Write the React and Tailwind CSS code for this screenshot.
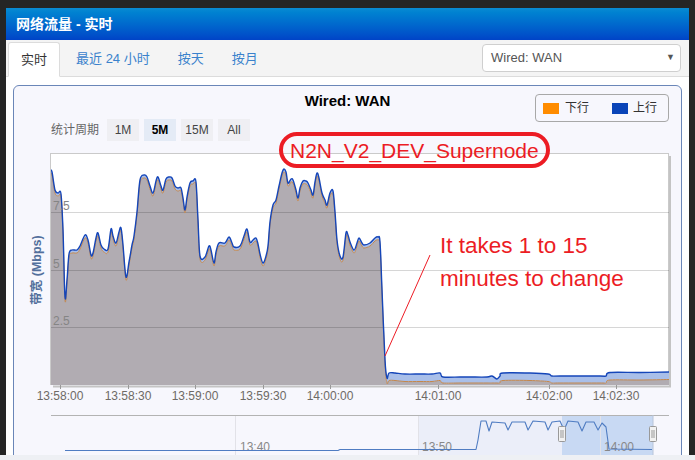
import React from "react";

// main series (upload, drawn on top) traced from the chart, page coords
const blue = [
  [50, 170], [52, 172], [55, 190], [58, 193], [61, 194], [63, 230], [65, 297], [67, 280], [69, 254], [72, 250],
  [77, 250], [80, 246], [85, 235], [88, 240], [91, 255], [93, 253], [96, 238], [98, 233], [101, 245], [104, 249],
  [108, 249], [111, 229], [113, 236], [116, 243], [119, 232], [121, 228], [123, 245], [126, 277], [129, 262],
  [132, 245], [134, 236], [137, 212], [140, 180], [144, 175], [147, 177], [150, 186], [153, 193], [156, 181],
  [158, 177], [161, 186], [163, 190], [166, 179], [169, 177], [172, 178], [175, 186], [178, 188], [181, 188],
  [183, 198], [185, 210], [187, 197], [190, 183], [193, 181], [196, 182], [198, 220], [200, 256], [205, 257],
  [209, 246], [211, 250], [214, 263], [216, 252], [219, 243], [225, 243], [229, 237], [232, 243], [234, 247],
  [240, 246], [244, 236], [247, 229], [250, 242], [253, 240], [256, 238], [258, 244], [260, 254], [263, 263],
  [266, 256], [268, 246], [270, 222], [273, 205], [276, 200], [279, 186], [282, 173], [284, 169], [286, 172],
  [288, 183], [291, 179], [293, 180], [296, 190], [298, 198], [300, 188], [303, 181], [306, 181], [308, 183],
  [311, 190], [313, 195], [315, 182], [317, 173], [319, 178], [322, 193], [325, 200], [327, 205], [330, 193],
  [333, 191], [335, 212], [337, 240], [340, 256], [343, 257], [346, 233], [348, 235], [350, 242], [354, 250],
  [357, 243], [359, 238], [362, 243], [364, 245], [370, 243], [375, 238], [378, 237], [380, 242], [382, 290],
  [385, 360], [387, 378], [389, 373], [395, 373], [405, 374], [420, 374], [432, 374], [440, 373], [443, 377],
  [460, 377], [470, 377], [487, 377], [492, 376], [497, 379], [500, 376], [503, 373], [530, 373], [548, 374],
  [552, 376], [560, 376], [600, 376], [606, 376], [610, 372.5], [640, 372.5], [669, 372],
];

const orange = blue.map(([x, y]) => [x, x < 386 ? Math.min(y + 3, 384) : Math.min(y + 7.5, 383)]);

const nav = [
  [65, 450.5], [338, 450.5], [340, 449.5], [476, 449.5], [478, 440], [481, 421], [486, 421], [489, 431], [492, 422],
  [505, 423], [508, 430], [512, 422], [525, 422], [528, 430], [533, 421], [545, 422], [548, 430], [552, 422],
  [560, 421], [564, 430], [568, 421], [578, 422], [582, 431], [586, 422], [594, 422], [598, 430], [602, 423],
  [606, 427], [609, 449], [652, 449.5],
];

// catmull-rom -> cubic bezier
function smooth(pts, start = "M") {
  let d = `${start}${pts[0][0]},${pts[0][1]}`;
  for (let i = 0; i < pts.length - 1; i++) {
    const p0 = pts[i - 1] || pts[i];
    const p1 = pts[i];
    const p2 = pts[i + 1];
    const p3 = pts[i + 2] || p2;
    const c1x = p1[0] + (p2[0] - p0[0]) / 6;
    const c1y = p1[1] + (p2[1] - p0[1]) / 6;
    const c2x = p2[0] - (p3[0] - p1[0]) / 6;
    const c2y = p2[1] - (p3[1] - p1[1]) / 6;
    d += ` C${c1x.toFixed(1)},${c1y.toFixed(1)} ${c2x.toFixed(1)},${c2y.toFixed(1)} ${p2[0]},${p2[1]}`;
  }
  return d;
}

const blueLine = smooth(blue);
const orangeLine = smooth(orange);
const upArea = blueLine + " " + smooth([...orange].reverse(), "L") + " Z";
const downArea = orangeLine + " L669,386 L50,386 Z";
const navLine = nav.map(([x, y], i) => `${i ? "L" : "M"}${x},${y}`).join(" ");

const xTicks = [
  [60, "13:58:00"], [128, "13:58:30"], [195, "13:59:00"], [263, "13:59:30"],
  [330, "14:00:00"], [438, "14:01:00"], [549, "14:02:00"], [616, "14:02:30"],
];

function Handle({ x }) {
  return (
    <g>
      <rect x={x - 3.5} y={426.5} width={7} height={15} rx={1} fill="#f2f2f2" stroke="#999" />
      <line x1={x - 1} y1={430} x2={x - 1} y2={438} stroke="#999" />
      <line x1={x + 1} y1={430} x2={x + 1} y2={438} stroke="#999" />
    </g>
  );
}

function Chart() {
  return (
    <svg width="667" height="305" viewBox="14 150 667 305" className="block">
      <defs>
        <clipPath id="plot">
          <rect x="51" y="153" width="618" height="232" />
        </clipPath>
      </defs>

      {/* plot frame + shadow */}
      <line x1="670" y1="156" x2="670" y2="387" stroke="#c4c4c4" strokeWidth="2" />
      <line x1="53" y1="386.5" x2="671" y2="386.5" stroke="#c4c4c4" strokeWidth="2" />
      <rect x="50.5" y="153.5" width="618" height="231" fill="#fff" stroke="#cacaca" />

      <g clipPath="url(#plot)">
        <path d={downArea} fill="#b1acb2" />
        <path d={upArea} fill="#a9bfe9" />
        {[212, 270, 327].map((y) => (
          <line key={y} x1="51" x2="669" y1={y + 0.5} y2={y + 0.5} stroke="rgba(0,0,0,0.16)" />
        ))}
        <path d={orangeLine} fill="none" stroke="#c3864b" strokeWidth="1" />
        <path d={blueLine} fill="none" stroke="#1546b9" strokeWidth="1.4" />
      </g>

      {/* y labels */}
      <g fontSize="12" fill="#858585" fontFamily="Liberation Sans, sans-serif">
        <text x="53" y="210">7.5</text>
        <text x="53" y="268">5</text>
        <text x="53" y="325">2.5</text>
      </g>
      <text
        transform="translate(41,270) rotate(-90)"
        textAnchor="middle"
        fontSize="12.5"
        fontWeight="bold"
        fill="#53709c"
        fontFamily="Liberation Sans, Noto Sans CJK SC, sans-serif"
      >
        带宽 (Mbps)
      </text>

      {/* x axis */}
      {xTicks.map(([x, label]) => (
        <g key={label}>
          <line x1={x + 0.5} x2={x + 0.5} y1="385" y2="389" stroke="#999" />
          <text x={x} y="400" textAnchor="middle" fontSize="12" fill="#6e6a66" fontFamily="Liberation Sans, sans-serif">
            {label}
          </text>
        </g>
      ))}

      {/* annotation pointer */}
      <line x1="385" y1="356" x2="430" y2="255" stroke="#ee1c25" strokeWidth="1" />

      {/* navigator */}
      <rect x="418" y="415" width="144" height="40" fill="#ebeef9" />
      <rect x="562" y="415" width="91" height="40" fill="#c8d9f3" />
      {[235, 418, 600].map((x) => (
        <line key={x} x1={x + 0.5} x2={x + 0.5} y1="415" y2="455" stroke="#e2e2e8" />
      ))}
      <line x1="51" x2="669" y1="415.5" y2="415.5" stroke="#b3b3b3" />
      <g fontSize="12" fill="#888" fontFamily="Liberation Sans, sans-serif">
        <text x="240" y="451">13:40</text>
        <text x="422" y="451">13:50</text>
        <text x="604" y="451">14:00</text>
      </g>
      <path d={navLine} fill="none" stroke="#4f7cc2" strokeWidth="1.1" strokeLinejoin="round" />
      <line x1="653" x2="653" y1="415" y2="455" stroke="#b8c4d8" />
      <Handle x={562} />
      <Handle x={653} />
    </svg>
  );
}

export default function App() {
  const tabs = ["最近 24 小时", "按天", "按月"];
  const ranges = ["1M", "5M", "15M", "All"];

  return (
    <div className="h-screen overflow-hidden bg-[#252525] font-['Liberation_Sans','Noto_Sans_CJK_SC',sans-serif]">
      <div className="px-[6px] pt-[8px]">
        <div className="h-[447px] overflow-hidden bg-white">
          {/* HEADER */}
          <div className="flex h-[32px] items-center bg-linear-to-b from-[#0a8bd2] to-[#0043c7] pl-[10px] text-[14px] font-bold text-white">
            网络流量 - 实时
          </div>

          {/* TABS */}
          <div className="flex h-[37px] items-end border-b border-[#dcdcdc] bg-[#f4f4f4] pl-[2px] pr-[8px]">
            <div className="-mb-px flex h-[35px] items-center rounded-t-[3px] border border-[#dcdcdc] border-b-white bg-white px-3 text-[13px] text-[#333]">
              实时
            </div>
            {tabs.map((t) => (
              <div key={t} className="ml-1 flex h-[35px] items-center px-3 text-[13px] text-[#3a82cc]">
                {t}
              </div>
            ))}
            <div className="ml-auto flex h-[28px] w-[199px] items-center justify-between self-center rounded-[4px] border border-[#cfcfcf] bg-white pl-[8px] pr-[5px] text-[13px] text-[#555]">
              <span>Wired: WAN</span>
              <span className="text-[9px] text-[#555]">▼</span>
            </div>
          </div>

          {/* BODY */}
          <div className="px-[7px] pt-[8px]">
            <div className="relative h-[400px] rounded-[6px] border border-[#6a86b8] bg-[#f7f7fd]">
              <div className="grid h-[64px] grid-cols-[1fr_auto_1fr]">
                <div className="flex items-start pl-[37px] pt-[33px]">
                  <span className="mr-[8px] flex h-[22px] items-center text-[12px] text-[#666]">统计周期</span>
                  <div className="flex gap-[5px]">
                    {ranges.map((r) => (
                      <div
                        key={r}
                        className={
                          r === "5M"
                            ? "flex h-[22px] w-[32px] items-center justify-center bg-[#e4ebf6] text-[12px] font-bold text-black"
                            : "flex h-[22px] w-[32px] items-center justify-center bg-[#efeff3] text-[12px] text-[#444]"
                        }
                      >
                        {r}
                      </div>
                    ))}
                  </div>
                </div>
                <div className="pt-[5px] text-[15px] font-bold leading-[20px] text-black">Wired: WAN</div>
                <div className="flex justify-end pr-[12px] pt-[8px]">
                  <div className="flex h-[28px] w-[134px] items-center rounded-[4px] border border-[#a8a8a8] pl-[7px] text-[12px] text-[#333]">
                    <span className="h-[11px] w-[16px] bg-[#ff8c00]" />
                    <span className="ml-[6px]">下行</span>
                    <span className="ml-[23px] h-[11px] w-[16px] bg-[#0a44b8]" />
                    <span className="ml-[5px]">上行</span>
                  </div>
                </div>
              </div>

              <Chart />

              {/* annotations */}
              <div className="absolute left-[265px] top-[46px] flex h-[36px] w-[271px] items-center rounded-[18px] border-4 border-[#ec1c24] pl-[7px] text-[21px] leading-none text-[#ec1c24]">
                N2N_V2_DEV_Supernode
              </div>
              <div className="absolute left-[426px] top-[143px] text-[22.5px] leading-[33px] text-[#ec1c24]">
                <div>It takes 1 to 15</div>
                <div>minutes to change</div>
              </div>
            </div>
          </div>
        </div>
      </div>
      <div className="h-[5px] bg-[#eef0f4]" />
    </div>
  );
}
